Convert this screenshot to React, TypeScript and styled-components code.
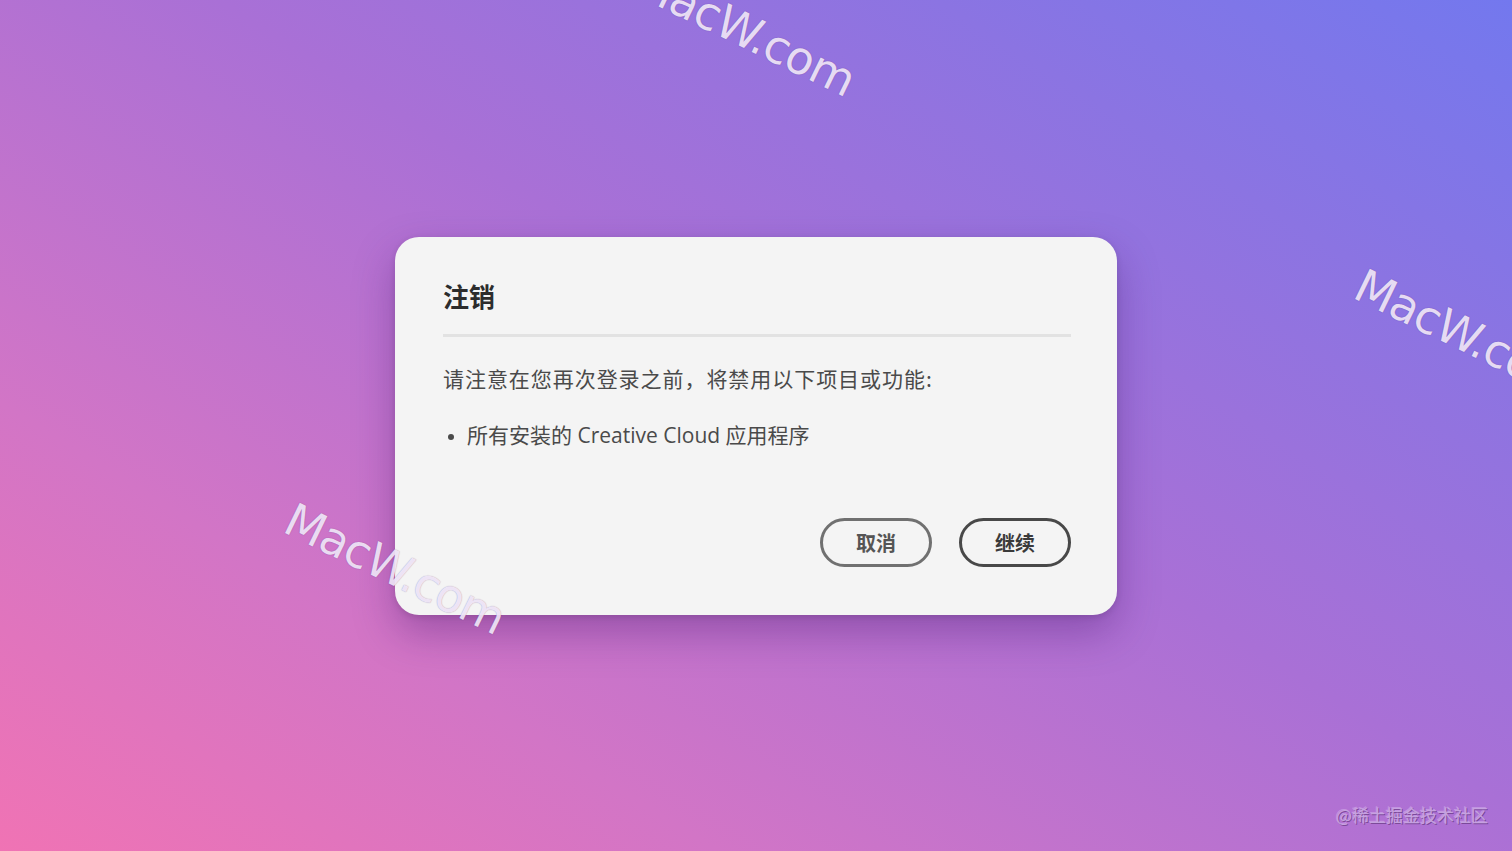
import * as React from 'react';
import styled, { createGlobalStyle } from 'styled-components';

const GlobalStyle = createGlobalStyle`
  html, body, #root {
    margin: 0;
    padding: 0;
    width: 100%;
    height: 100%;
  }
  body {
    font-family: "Noto Sans", "Noto Sans CJK SC", sans-serif;
    overflow: hidden;
  }
`;

const Screen = styled.div`
  position: relative;
  width: 1512px;
  height: 851px;
  overflow: hidden;
  display: flex;
  align-items: center;
  justify-content: center;
  background: linear-gradient(
    32deg,
    #f073b4 0%,
    #d275c6 25%,
    #a970d6 55%,
    #8b74e2 80%,
    #7378ee 100%
  );
`;

const Dialog = styled.div`
  width: 722px;
  box-sizing: border-box;
  padding: 45px 46px 48px 48px;
  background: #f4f4f4;
  border-radius: 24px;
  box-shadow: 0 18px 40px rgba(70, 20, 110, 0.35), 0 2px 6px rgba(0, 0, 0, 0.12);
  display: flex;
  flex-direction: column;
`;

const Title = styled.h2`
  margin: 0 0 24px;
  font-family: "Noto Sans CJK SC", sans-serif;
  font-size: 26px;
  line-height: 28px;
  font-weight: 700;
  color: #2c2c2c;
`;

const Divider = styled.div`
  height: 3px;
  background: #e2e2e2;
  margin-bottom: 28px;
`;

const Body = styled.p`
  margin: 0;
  font-family: "Noto Sans CJK SC", sans-serif;
  font-size: 21px;
  line-height: 26px;
  color: #4a4a4a;
  letter-spacing: 0.95px;
`;

const List = styled.ul`
  margin: 31px 0 0;
  padding: 0 0 0 24px;
  font-family: "Open Sans", "Noto Sans CJK SC", sans-serif;
  font-size: 21px;
  line-height: 26px;
  color: #4a4a4a;

  li::marker {
    font-size: 18px;
  }
`;

const Actions = styled.div`
  display: flex;
  justify-content: flex-end;
  gap: 27px;
  margin-top: 70px;
`;

const Button = styled.button<{ primary?: boolean }>`
  width: 112px;
  height: 49px;
  box-sizing: border-box;
  border-radius: 25px;
  background: transparent;
  border: 3px solid ${(p) => (p.primary ? '#484848' : '#707070')};
  color: ${(p) => (p.primary ? '#3a3a3a' : '#555555')};
  font-family: "Noto Sans CJK SC", sans-serif;
  font-size: 20px;
  font-weight: 700;
  cursor: pointer;
`;

const Watermark = styled.div<{ x: number; y: number }>`
  position: absolute;
  left: ${(p) => p.x}px;
  top: ${(p) => p.y}px;
  transform-origin: left top;
  transform: rotate(26deg);
  font-family: "DejaVu Sans", sans-serif;
  font-weight: 400;
  font-size: 46px;
  letter-spacing: -1px;
  line-height: 1;
  color: rgba(248, 240, 255, 0.88);
  text-shadow: 0 0 1px rgba(60, 20, 90, 0.45);
  white-space: nowrap;
  pointer-events: none;
`;

const Credit = styled.div`
  position: absolute;
  right: 24px;
  bottom: 24px;
  font-family: "Noto Sans CJK SC", sans-serif;
  font-size: 17px;
  color: rgba(200, 165, 225, 0.95);
  text-shadow: 1px 1px 0 rgba(80, 40, 105, 0.55), -1px -1px 0 rgba(235, 215, 250, 0.35);
`;

export default function App() {
  return (
    <Screen>
      <GlobalStyle />
      <Dialog>
        <Title>注销</Title>
        <Divider />
        <Body>请注意在您再次登录之前，将禁用以下项目或功能:</Body>
        <List>
          <li>所有安装的 Creative Cloud 应用程序</li>
        </List>
        <Actions>
          <Button>取消</Button>
          <Button primary>继续</Button>
        </Actions>
      </Dialog>
      <Watermark x={648} y={-42}>MacW.com</Watermark>
      <Watermark x={1368} y={262}>MacW.com</Watermark>
      <Watermark x={298} y={496}>MacW.com</Watermark>
      <Credit>@稀土掘金技术社区</Credit>
    </Screen>
  );
}
